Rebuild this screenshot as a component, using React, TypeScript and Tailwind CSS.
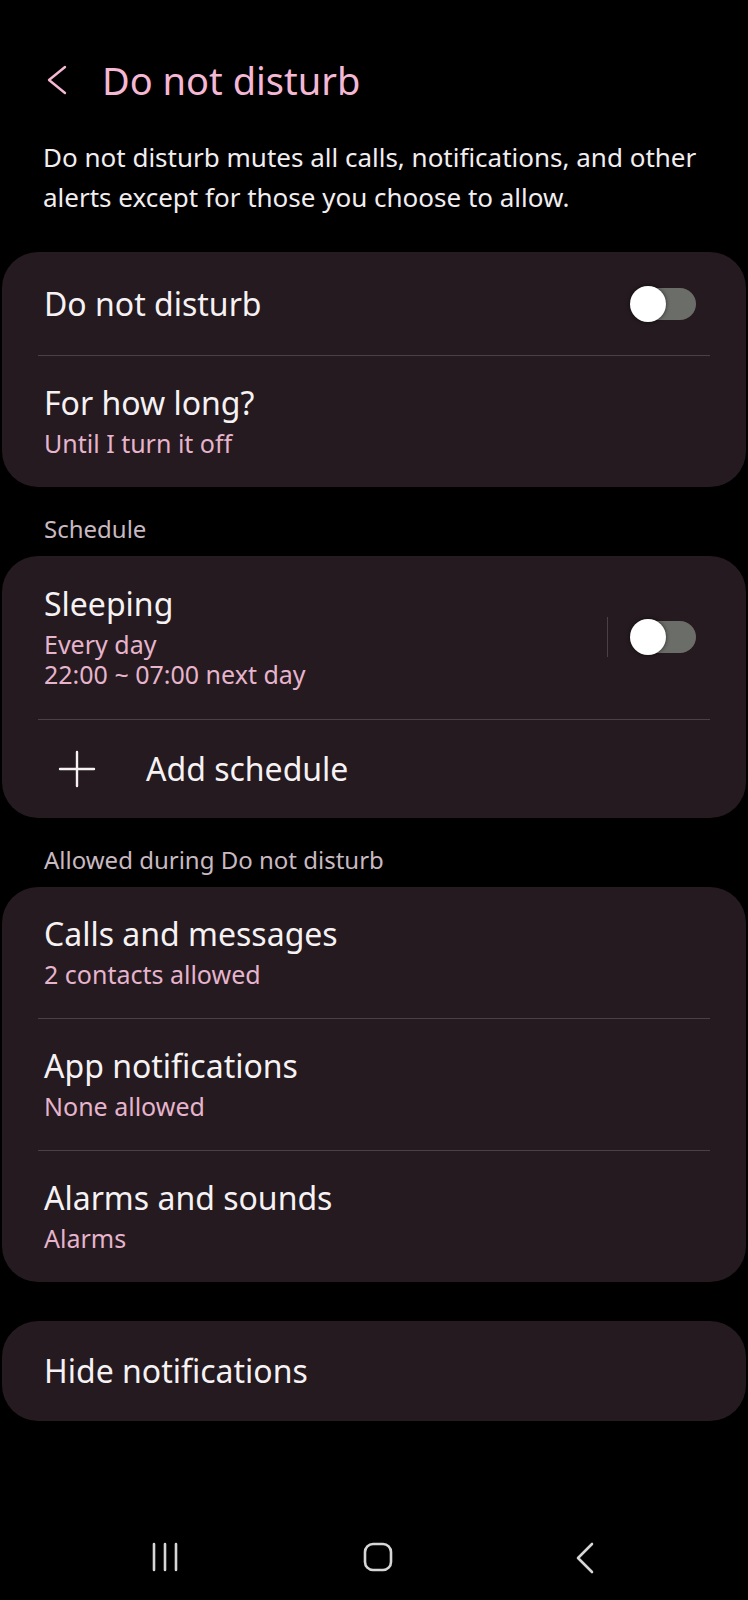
import React, { useState } from 'react';

const FONT = { fontFamily: '"Noto Sans", "Open Sans", sans-serif' };

interface RowProps {
  title: string;
  sub?: string;
}

const Divider: React.FC = () => <div className="mx-[36px] h-px bg-[#4a4045]" />;

const Toggle: React.FC<{ on: boolean; onClick: () => void }> = ({ on, onClick }) => (
  <button onClick={onClick} className="relative h-[36px] w-[68px] shrink-0">
    <span
      className={`absolute left-[2px] right-[2px] top-[2px] h-[32px] rounded-full ${
        on ? 'bg-[#f4b8d4]' : 'bg-[#6b6d68]'
      }`}
    />
    <span
      className={`absolute top-0 h-[36px] w-[36px] rounded-full bg-white shadow-[0_0_4px_rgba(0,0,0,0.6)] ${
        on ? 'left-[32px]' : 'left-0'
      }`}
    />
  </button>
);

const TwoLineRow: React.FC<RowProps> = ({ title, sub }) => (
  <div className="px-[42px] pt-[27px] pb-[29px]">
    <div className="text-[32px] leading-[40px] text-[#f6f2f4]">{title}</div>
    <div className="mt-[5px] text-[25px] leading-[30px] text-[#e6b4cc]">{sub}</div>
  </div>
);

const SectionHeader: React.FC<{ label: string }> = ({ label }) => (
  <div className="px-[44px] pt-[27px] pb-[12px] text-[24px] leading-[30px] text-[#c9b9c1]">{label}</div>
);

const Card: React.FC<{ children: React.ReactNode }> = ({ children }) => (
  <div className="mx-[2px] rounded-[36px] bg-[#241a1f] overflow-hidden">{children}</div>
);

export default function App() {
  const [dnd, setDnd] = useState(false);
  const [sleeping, setSleeping] = useState(false);

  return (
    <div className="flex min-h-[1600px] w-full flex-col bg-black" style={FONT}>
      {/* header */}
      <div className="flex items-center pt-[56px] pl-[46px]">
        <svg width="22" height="32" viewBox="0 0 22 32" className="mr-[34px]">
          <path d="M19 3 L3 16 L19 29" fill="none" stroke="#f4b8d4" strokeWidth="2.4" strokeLinecap="round" strokeLinejoin="round" />
        </svg>
        <h1 className="text-[38px] leading-[48px] text-[#f4b8d4]">Do not disturb</h1>
      </div>

      <p className="pl-[43px] pr-[40px] pt-[33px] pb-[35px] text-[26px] leading-[40px] text-[#f2eef0]">
        Do not disturb mutes all calls, notifications, and other alerts except for those you choose to allow.
      </p>

      <Card>
        <div className="flex h-[103px] items-center justify-between pl-[42px] pr-[48px]">
          <span className="text-[32px] leading-[40px] text-[#f6f2f4]">Do not disturb</span>
          <Toggle on={dnd} onClick={() => setDnd(!dnd)} />
        </div>
        <Divider />
        <TwoLineRow title="For how long?" sub="Until I turn it off" />
      </Card>

      <SectionHeader label="Schedule" />
      <Card>
        <div className="flex items-center justify-between pl-[42px] pr-[48px] pt-[28px] pb-[30px]">
          <div>
            <div className="text-[32px] leading-[40px] text-[#f6f2f4]">Sleeping</div>
            <div className="mt-[5px] text-[25px] leading-[30px] text-[#e6b4cc]">Every day</div>
            <div className="text-[25px] leading-[30px] text-[#e6b4cc]">22:00 ~ 07:00 next day</div>
          </div>
          <div className="flex items-center">
            <div className="mr-[22px] h-[40px] w-px bg-[#4a4045]" />
            <Toggle on={sleeping} onClick={() => setSleeping(!sleeping)} />
          </div>
        </div>
        <Divider />
        <div className="flex h-[98px] items-center pl-[56px]">
          <svg width="38" height="38" viewBox="0 0 38 38" className="mr-[50px]">
            <path d="M19 2 V36 M2 19 H36" stroke="#f6f2f4" strokeWidth="2.4" strokeLinecap="round" />
          </svg>
          <span className="text-[32px] leading-[40px] text-[#f6f2f4]">Add schedule</span>
        </div>
      </Card>

      <SectionHeader label="Allowed during Do not disturb" />
      <Card>
        <TwoLineRow title="Calls and messages" sub="2 contacts allowed" />
        <Divider />
        <TwoLineRow title="App notifications" sub="None allowed" />
        <Divider />
        <TwoLineRow title="Alarms and sounds" sub="Alarms" />
      </Card>

      <div className="mt-[39px]">
        <Card>
          <div className="flex h-[100px] items-center px-[42px]">
            <span className="text-[32px] leading-[40px] text-[#f6f2f4]">Hide notifications</span>
          </div>
        </Card>
      </div>

      {/* navigation bar */}
      <div className="mt-auto flex h-[110px] items-start justify-between pl-[150px] pr-[153px] pt-[52px]">
        <svg width="30" height="30" viewBox="0 0 30 30">
          <path d="M4 2 V28 M15 2 V28 M26 2 V28" stroke="#d6d6d6" strokeWidth="2.6" strokeLinecap="round" />
        </svg>
        <svg width="30" height="30" viewBox="0 0 30 30">
          <rect x="2" y="2" width="26" height="26" rx="8" fill="none" stroke="#d6d6d6" strokeWidth="2.6" />
        </svg>
        <svg width="20" height="32" viewBox="0 0 20 32">
          <path d="M17 2 L3 16 L17 30" fill="none" stroke="#d6d6d6" strokeWidth="2.6" strokeLinecap="round" strokeLinejoin="round" />
        </svg>
      </div>
    </div>
  );
}
